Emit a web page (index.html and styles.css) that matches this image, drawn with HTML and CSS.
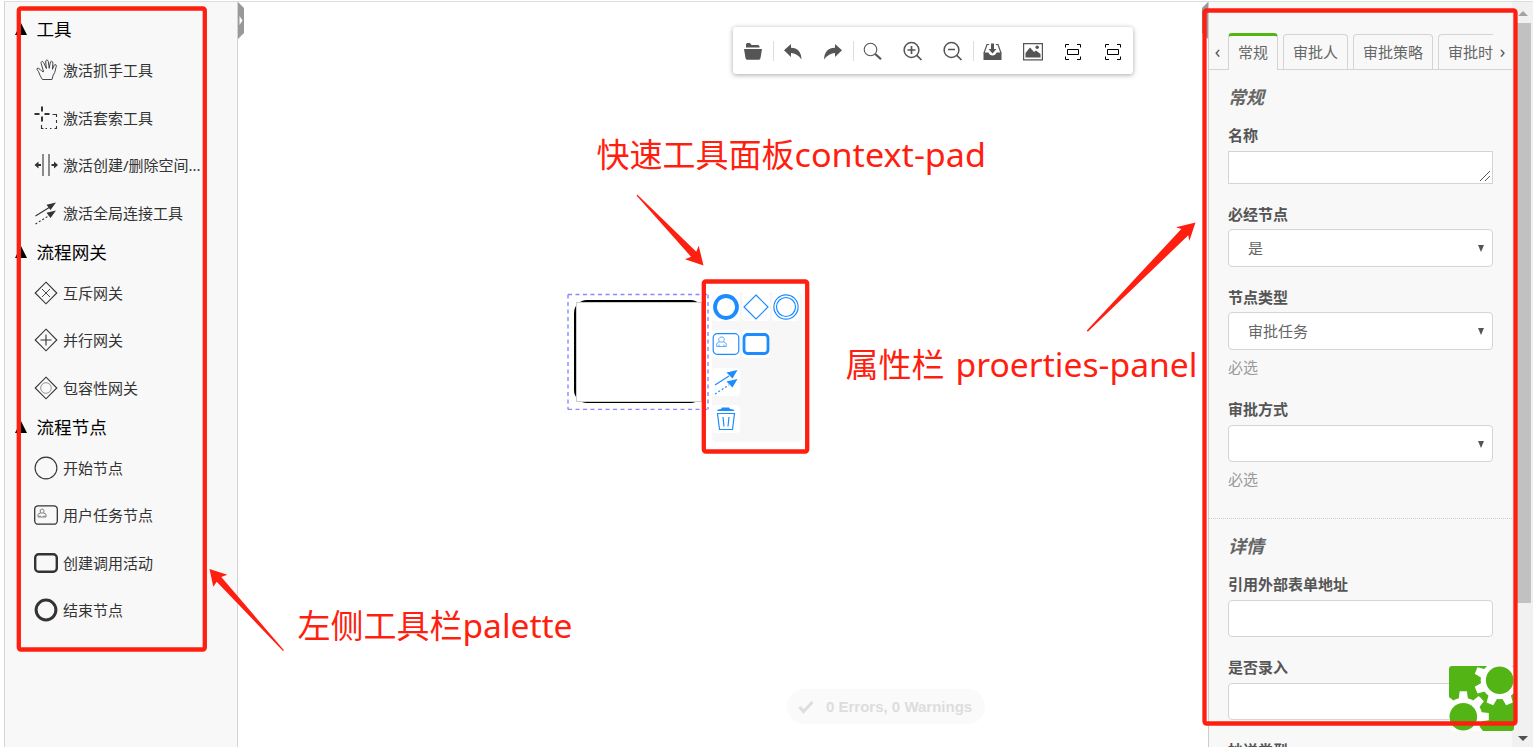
FILE: index.html
```html
<!DOCTYPE html>
<html lang="zh-CN">
<head>
<meta charset="utf-8">
<title>流程设计器</title>
<link rel="stylesheet" href="styles.css">
</head>
<body>
<div class="app">
  <aside class="palette">
    <section>
      <h3 class="group"><i class="caret"></i>工具</h3>
      <div class="entry"><svg class="ico" viewBox="0 0 24 24"><path stroke-width=".9" d="M8.400 21.500L18 21.500Q18.600 17.500 20.700 14.500L22.300 8.200Q22.400 6.600 21.300 6.500Q20.300 6.500 19.800 8L18.400 11.300L18.900 5Q18.700 3.300 17.500 3.300Q16.500 3.300 16.200 5L15.200 10.300L14.300 3.500Q13.900 1.900 12.700 2Q11.500 2.300 11.700 4L12.400 10.500L9.600 4.500Q8.800 3.100 7.700 3.600Q6.700 4.200 7.200 5.700L9.600 13.700Q8 13.900 6.200 11.500Q4.200 9.500 3 10.500Q2.500 11.500 4.500 13.500Q6 18 8.400 21.500Z"/></svg><span>激活抓手工具</span></div>
      <div class="entry"><svg class="ico" viewBox="0 0 24 24"><path stroke-width="2" d="M8 .5v5M8 10.500v5M.5 8h5M10.500 8h5"/><path d="M18.500 8.500h4v2.500M22.500 14v3M22.500 20v2.500h-2M17.500 22.500h-1.500M13 22.500h-1.500M7.500 19v3.500h2"/></svg><span>激活套索工具</span></div>
      <div class="entry"><svg class="ico" viewBox="0 0 24 24"><path d="M9 1v22M15 1v22"/><path stroke-width="1.800" d="M3 12h4M17.500 12h4"/><path class="solid" d="M.5 12l4-3.500v7zM24 12l-4-3.500v7z"/></svg><span>激活创建/删除空间...</span></div>
      <div class="entry"><svg class="ico" viewBox="0 0 24 24"><path d="M1.500 15L16 6"/><path stroke-dasharray="2 2" d="M1.500 23L16 14"/><path class="solid" d="M22 1.500l-5.500 7.500-4-5.300zM22 9.500l-5.500 7.500-4-5.300z"/></svg><span>激活全局连接工具</span></div>
    </section>
    <section>
      <h3 class="group"><i class="caret"></i>流程网关</h3>
      <div class="entry"><svg class="ico" viewBox="0 0 24 24"><path d="M12 1.200L22.800 12 12 22.800 1.200 12z"/><path stroke-width=".9" d="M8 8l8 8M16 8l-8 8"/></svg><span>互斥网关</span></div>
      <div class="entry"><svg class="ico" viewBox="0 0 24 24"><path d="M12 1.200L22.800 12 12 22.800 1.200 12zM12 6.500v11M6.500 12h11"/></svg><span>并行网关</span></div>
      <div class="entry"><svg class="ico" viewBox="0 0 24 24"><path d="M12 1.200L22.800 12 12 22.800 1.200 12z"/><circle cx="12" cy="12" r="5.300" stroke-width=".5"/></svg><span>包容性网关</span></div>
    </section>
    <section>
      <h3 class="group"><i class="caret"></i>流程节点</h3>
      <div class="entry"><svg class="ico" viewBox="0 0 24 24"><circle cx="12" cy="12" r="10.900"/></svg><span>开始节点</span></div>
      <div class="entry"><svg class="ico" viewBox="0 0 24 24"><rect x=".7" y="2.800" width="22.600" height="18.400" rx="3.500" stroke-width="1.300"/><path stroke-width=".6" d="M4 14v-2.700l2.400-1.300h3.200l2.400 1.300V14zM6 14v-1.500M10 14v-1.500M6.300 9.800Q5.300 6.200 8 6t1.700 3.800"/></svg><span>用户任务节点</span></div>
      <div class="entry"><svg class="ico" viewBox="0 0 24 24"><rect x="1.200" y="3.200" width="21.600" height="17.600" rx="3.500" stroke-width="2.400"/></svg><span>创建调用活动</span></div>
      <div class="entry"><svg class="ico" viewBox="0 0 24 24"><circle cx="12" cy="12" r="9.900" stroke-width="3"/></svg><span>结束节点</span></div>
    </section>
  </aside>

  <main class="canvas">
    <svg class="handle handle-left" viewBox="0 0 7 37"><path fill="#999" d="M0 0l6 6v25l-6 6z"/><path fill="#fff" d="M1.500 14v9l3-4.500z"/></svg>
    <svg class="handle handle-right" viewBox="0 0 7 37"><path fill="#999" d="M7 0l-6 6v25l6 6z"/></svg>

    <div class="toolbar">
      <svg class="tool" viewBox="0 0 20 20"><path d="M3 3.500Q3 2 4.500 2H7l1.500 2H15q1.500 0 1.500 1.800v.7H3zM1 8h18l-1.500 9q-.3 1.800-1.500 1.800H4q-1.200 0-1.500-1.800z"/></svg>
      <i class="sep"></i>
      <svg class="tool" viewBox="0 0 20 20"><path d="M1 9.200L8 3v3.700Q18 7 18.500 18.500 14 12 8 12v4z"/></svg>
      <svg class="tool" viewBox="0 0 20 20"><path d="M19 9.200L12 3v3.700Q1.500 7 1 18.500 6 12 12 12v4z"/></svg>
      <i class="sep"></i>
      <svg class="tool line" viewBox="0 0 20 20"><circle cx="7.500" cy="8.500" r="6.300" stroke-width="1.100"/><path stroke-width="2.200" d="M12.200 13l5.800 5.300"/></svg>
      <svg class="tool line" viewBox="0 0 20 20"><circle cx="8.500" cy="9" r="7.400" stroke-width="1.500"/><path stroke-width="1.700" d="M13.800 14.300l4.700 4.700M4.500 9h8M8.500 5v8"/></svg>
      <svg class="tool line" viewBox="0 0 20 20"><circle cx="8.500" cy="9" r="7.400" stroke-width="1.500"/><path stroke-width="1.700" d="M13.800 14.300l4.700 4.700M5 8.500h7"/></svg>
      <i class="sep"></i>
      <svg class="tool" viewBox="0 0 20 20"><path d="M.5 11.500h5q1 3 4 3t4-3h5v7.500H.5zM8 2.500h3V8h2.500L9.500 12.500 5.500 8H8z"/><path fill="none" stroke="#555" stroke-width="1.200" d="M1 12L4 3.500h2.200M18 12L15 3.500h-2.200"/></svg>
      <svg class="tool" viewBox="0 0 20 20"><path fill="none" stroke="#555" stroke-width="1.200" d="M.6 2.600h18.800v16.300H.6z"/><path d="M2.500 16.500V12L7 6.500l4 4.500 2-1.500 4.500 3.500v3.500z"/><circle cx="14.200" cy="6.200" r="1.700"/></svg>
      <svg class="tool frame" viewBox="0 0 20 20"><path d="M2.500 6.500V3.500H6M14 3.500h3.500v3M17.500 15.500v3H14M6 18.500H2.500v-3M4.500 8.500h11v5h-11z"/></svg>
      <svg class="tool frame" viewBox="0 0 20 20"><path d="M2.500 6.500V3.500H6M14 3.500h3.500v3M17.500 15.500v3H14M6 18.500H2.500v-3M4.500 8.500h11v5h-11z"/></svg>
    </div>

    <svg class="shape" viewBox="0 0 144 118">
      <rect x="9" y="9" width="127.500" height="101" rx="12" fill="#fff" stroke="#000" stroke-width="2"/>
      <rect x="10.500" y="10.500" width="125" height="99" fill="#fff" stroke="#ccc"/>
      <path fill="none" stroke="#8888ff" stroke-width="1.400" stroke-dasharray="4 3.500" d="M2 2.500h140M2 117.500h140M2 2.500v115M142 2.500v115"/>
    </svg>

    <div class="pad">
      <svg class="act" viewBox="0 0 28 28"><circle cx="14" cy="14" r="11" stroke-width="3.800"/></svg>
      <svg class="act" viewBox="0 0 28 28"><path d="M14 2l12 12-12 12L2 14z"/></svg>
      <svg class="act" viewBox="0 0 28 28"><circle cx="14" cy="14" r="12.100"/><circle cx="14" cy="14" r="9.500"/></svg>
      <svg class="act row" viewBox="0 0 28 28"><rect x="1.200" y="3.700" width="25.600" height="20.600" rx="4"/><path stroke-width=".7" d="M4.700 16.500v-3l2.500-1.500h4.600l2.500 1.500v3zM7 16.500v-2M12 16.500v-2M7.300 11.800Q5.500 7.300 9.500 7t2.200 4.800"/></svg>
      <svg class="act" viewBox="0 0 28 28"><rect x="2" y="4.500" width="24" height="19" rx="3.500" stroke-width="2.800"/></svg>
      <svg class="act row" viewBox="0 0 28 28"><path d="M3 17l14-9"/><path stroke-dasharray="2 2" d="M3 26l14-9"/><path class="blue" d="M25.500 2l-5 8.500-6-6zM25.500 11l-5 8.500-6-6z"/></svg>
      <svg class="act row" viewBox="0 0 28 28"><path class="blue" d="M5 6q.5-2 4-2l1-1.500h7l1 1.500q4 0 4.500 2z"/><path d="M5.500 8.500h17l-2 16h-13zM11 12l1 9.500M17 12l-1 9.500"/></svg>
    </div>

    <div class="status"><svg class="check" viewBox="0 0 16 14"><path d="M1.500 7l4 4.500L14.500 2"/></svg>0 Errors, 0 Warnings</div>
  </main>

  <aside class="panel">
    <div class="props">
      <nav class="tabs">
        <span class="nav">‹</span>
        <div class="strip">
          <a class="tab active">常规</a><a class="tab">审批人</a><a class="tab">审批策略</a><a class="tab cut">审批时</a>
        </div>
        <span class="nav">›</span>
      </nav>
      <section class="block first">
        <h4 class="title">常规</h4>
        <label class="label">名称</label>
        <div class="box area"><svg class="grip" viewBox="0 0 12 12"><path d="M1 11L11 1M6 11l5-5"/></svg></div>
        <label class="label">必经节点</label>
        <div class="box select">是<i class="drop"></i></div>
        <label class="label">节点类型</label>
        <div class="box select">审批任务<i class="drop"></i></div>
        <p class="hint">必选</p>
        <label class="label">审批方式</label>
        <div class="box select short"><i class="drop"></i></div>
        <p class="hint">必选</p>
      </section>
      <section class="block second">
        <h4 class="title">详情</h4>
        <label class="label">引用外部表单地址</label>
        <div class="box short"></div>
        <label class="label">是否录入</label>
        <div class="box short"></div>
        <label class="label">抄送类型</label>
      </section>
    </div>
    <div class="scroll"><i class="up"></i><div class="thumb"></div><i class="down"></i></div>
    <svg class="logo" viewBox="0 0 65 65">
      <defs>
        <clipPath id="tile"><rect width="65" height="65" rx="3"/></clipPath>
        <g id="gear"><circle r="19"/><path id="tooth" d="M-3.600-25.500h7.200l1.200 9h-9.600z"/><use href="#tooth" transform="rotate(45)"/><use href="#tooth" transform="rotate(90)"/><use href="#tooth" transform="rotate(135)"/><use href="#tooth" transform="rotate(180)"/><use href="#tooth" transform="rotate(225)"/><use href="#tooth" transform="rotate(270)"/><use href="#tooth" transform="rotate(315)"/></g>
      </defs>
      <g clip-path="url(#tile)"><rect width="65" height="65" fill="#52b415"/>
        <use href="#gear" fill="#fff" transform="translate(50.700 14.300) rotate(22.500)"/><use href="#gear" fill="#fff" transform="translate(14.300 50.700)"/></g>
      <circle cx="50.700" cy="14.300" r="13.800" fill="#52b415"/><circle cx="14.300" cy="50.700" r="13.800" fill="#52b415"/>
    </svg>
  </aside>
</div>

<svg class="notes" viewBox="0 0 1533 747">
  <g class="frames">
    <rect x="18.800" y="8.500" width="186" height="641" rx="2"/>
    <rect x="703.800" y="281.500" width="103.400" height="170" rx="2"/>
    <rect x="1204.500" y="10.500" width="311" height="713" rx="2"/>
  </g>
  <path d="M636.500 195.500L637.500 194.700L696.300 251.700 698.700 245.700 703.500 265.500 685 259.300 691 256.700z"/>
  <path d="M1086.800 330.500L1181.300 229 1176 227.300 1195.500 222.500 1189.300 241 1188.300 235.300L1087.800 331.800z"/>
  <path d="M284 650.300L221.300 577 227.300 574.700 209.500 569 213.300 586.700 216.700 581.700L283 651z"/>
  <text x="596.500" y="167">快速工具面板<tspan textLength="191.500" lengthAdjust="spacingAndGlyphs">context-pad</tspan></text>
  <text x="845.500" y="376.500">属性栏<tspan x="955.500" textLength="242" lengthAdjust="spacingAndGlyphs">proerties-panel</tspan></text>
  <text x="297.500" y="637.500">左侧工具栏<tspan textLength="110" lengthAdjust="spacingAndGlyphs">palette</tspan></text>
</svg>
</body>
</html>
```

FILE: styles.css
```css
* { box-sizing: border-box; }
body {
  margin: 0;
  height: 747px;
  overflow: hidden;
  background: #fff;
  font: 15px/20px "Noto Sans", "Noto Sans CJK SC", sans-serif;
  color: #333;
}
h3, h4, p { margin: 0; }
i { font-style: normal; }

.app {
  display: flex;
  height: 746px;
  margin: 1px 0 0 4px;
  border-top: 1px solid #ddd;
}

/* left palette */
.palette {
  width: 234px;
  flex: none;
  padding-top: 12px;
  background: #f8f8f8;
  border: solid #d4d4d4;
  border-width: 0 1px;
}
.group {
  display: flex;
  align-items: center;
  height: 32.5px;
  padding: 0 0 2px 10px;
  gap: 9.500px;
  font-size: 17.6px;
  font-weight: 400;
  color: #000;
  white-space: nowrap;
}
.caret {
  border: 6px solid transparent;
  border-top: 0;
  border-bottom: 12px solid #000;
}
.entry {
  display: flex;
  align-items: center;
  gap: 5.500px;
  height: 47.5px;
  padding-left: 28.5px;
  white-space: nowrap;
}
.ico {
  width: 24px;
  height: 24px;
  flex: none;
  fill: none;
  stroke: #333;
  stroke-width: 1.1;
}
.ico .solid { fill: #333; stroke: none; }

/* canvas */
.canvas { position: relative; flex: 1; min-width: 0; }
.handle { position: absolute; top: 0; width: 7px; height: 37px; }
.handle-left { left: 0; }
.handle-right { right: 0; }
.toolbar {
  position: absolute;
  left: 495px;
  top: 25px;
  display: flex;
  align-items: center;
  justify-content: space-between;
  width: 400px;
  height: 47px;
  padding: 0 10px;
  background: #fff;
  border-radius: 3px;
  box-shadow: 0 1px 5px rgba(0, 0, 0, .35);
}
.tool { width: 20px; height: 20px; fill: #555; }
.line { fill: none; stroke: #555; }
.frame { fill: none; stroke: #000; }
.sep { width: 1px; height: 20px; margin: 0 -10.500px; background: #ddd; }

.shape { position: absolute; left: 328px; top: 290px; width: 144px; height: 118px; }
.pad {
  position: absolute;
  left: 474px;
  top: 291px;
  display: grid;
  grid-template-columns: repeat(3, 28px);
  grid-auto-rows: 28px;
  align-content: start;
  gap: 9.300px 2px;
  width: 90px;
  height: 149px;
  background: #f7f7f7;
  border-radius: 4px;
}
.act {
  width: 28px;
  height: 28px;
  background: #fff;
  border-radius: 4px;
  fill: none;
  stroke: #1c8cff;
  stroke-width: 1.2;
}
.act.row { grid-column-start: 1; }
.act .blue { fill: #1c8cff; stroke: none; }

.status {
  position: absolute;
  left: 549px;
  top: 687px;
  display: flex;
  align-items: center;
  gap: 12px;
  width: 198px;
  height: 35px;
  padding-left: 11px;
  border-radius: 18px;
  background: #fafafa;
  color: #ddd;
  font: bold 15px "Liberation Sans", sans-serif;
  white-space: nowrap;
}
.check { width: 16px; height: 14px; fill: none; stroke: #ddd; stroke-width: 3; }

/* properties panel */
.panel {
  position: relative;
  display: flex;
  width: 325px;
  flex: none;
  overflow: hidden;
  background: #f8f8f8;
  border-left: 1px solid #ccc;
  color: #666;
}
.props { width: 303px; flex: none; }
.tabs {
  display: flex;
  height: 68px;
  padding-top: 31px;
  border-bottom: 1px solid #d4d4d4;
}
.nav { width: 19px; flex: none; font-size: 18px; line-height: 37px; text-align: center; color: #555; }
.nav:first-child { width: 17px; margin-right: 2px; }
.strip { display: flex; gap: 5px; width: 265px; height: 37px; overflow: hidden; }
.tab {
  flex: none;
  height: 36px;
  margin-top: 1px;
  padding: 0 9px;
  border: 1px solid #d4d4d4;
  border-bottom: 0;
  border-radius: 4px 4px 0 0;
  line-height: 34px;
}
.tab.active { height: 37px; margin-top: 0; border-top: 3px solid #52b415; background: #f8f8f8; line-height: 33px; }
.tab.cut { width: 55px; padding-right: 0; border-right: 0; border-top-right-radius: 0; }
.nav, .strip { margin-bottom: -1px; }

.block { padding: 0 19px; }
.first { height: 449px; padding-top: 17px; border-bottom: 1px dotted #ccc; }
.second { padding-top: 17px; }
.title {
  margin-bottom: 18px;
  font-size: 18px;
  font-style: italic;
  font-weight: 700;
}
.label { display: block; margin-bottom: 5px; font-weight: 700; color: #555; }
.box {
  position: relative;
  height: 38px;
  margin-bottom: 20px;
  padding: 0 19px;
  border: 1px solid #d4d4d4;
  border-radius: 4px;
  background: #fff;
  line-height: 36px;
}
.box.short { height: 37px; margin: 6px 0 20px; }
.box.area { height: 33px; margin-top: 6px; border-radius: 0; }
.grip { position: absolute; right: 1px; bottom: 1px; width: 12px; height: 12px; fill: none; stroke: #555; }
.drop {
  position: absolute;
  right: 8px;
  top: 15px;
  border: 3.5px solid transparent;
  border-top: 7px solid #555;
  border-bottom: 0;
}
.hint { height: 20px; margin: -13px 0 22px; color: #999; }

.scroll {
  display: flex;
  flex-direction: column;
  align-items: center;
  width: 21px;
  flex: none;
  padding: 9px 2px 6px;
  background: #f1f1f1;
}
.up { border: 5px solid transparent; border-top: 0; border-bottom-color: #a3a3a3; }
.thumb { width: 17px; height: 580px; margin-top: 7px; background: #c1c1c1; }
.down { margin-top: auto; border: 5px solid transparent; border-bottom: 0; border-top-color: #505050; }
.logo { position: absolute; left: 240px; top: 664px; width: 65px; height: 65px; }

/* red annotations over the whole page */
.notes { position: absolute; left: 0; top: 0; width: 1533px; height: 747px; fill: #ff1f10; pointer-events: none; }
.frames { fill: none; stroke: #ff1f10; stroke-width: 4.300; }
.notes text { font: 33px "Noto Sans", "Noto Sans CJK SC", sans-serif; }
```
